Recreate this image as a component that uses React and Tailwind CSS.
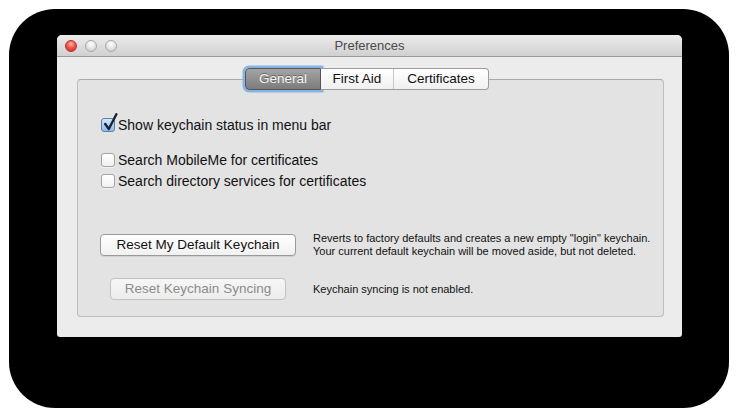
import React from "react";

const Light = ({ red }) => (
  <span
    className={
      red
        ? "w-[12px] h-[12px] rounded-full border border-[#b5312c] bg-[radial-gradient(circle_at_50%_30%,#ffb3aa_0%,#f2564d_45%,#c92a24_100%)]"
        : "w-[12px] h-[12px] rounded-full border border-[#a8a8a8] bg-[radial-gradient(circle_at_50%_30%,#ffffff_0%,#e4e4e4_50%,#c4c4c4_100%)]"
    }
  />
);

const Box = ({ checked }) => (
  <span
    className={
      checked
        ? "relative w-[14px] h-[14px] shrink-0 rounded-[3px] border border-[#5b7fab] bg-[linear-gradient(#d4e6f8,#8fbbe9)]"
        : "relative w-[14px] h-[14px] shrink-0 rounded-[3px] border border-[#a3a3a3] bg-[linear-gradient(#ffffff,#f1f1f1)] shadow-[0_1px_0_rgba(255,255,255,0.6)]"
    }
  >
    {checked && (
      <svg
        className="absolute left-[1px] -top-[6px]"
        width="15"
        height="19"
        viewBox="0 0 15 19"
      >
        <path
          d="M2.2 11 L5.8 16 L13.4 1.2"
          fill="none"
          stroke="#17243d"
          strokeWidth="2.4"
          strokeLinecap="round"
          strokeLinejoin="round"
        />
      </svg>
    )}
  </span>
);

const CheckRow = ({ checked, children }) => (
  <div className="flex items-center gap-[3px] h-[21px] pl-[1px]">
    <Box checked={checked} />
    <span className="text-[14px] text-[#111] leading-none">{children}</span>
  </div>
);

export default function App() {
  return (
    <div className="w-[739px] h-[417px] bg-white pt-[9px] pl-[9px] font-['Liberation_Sans',Arial,sans-serif]">
      <div className="w-[720px] h-[399px] rounded-[46px] bg-black pt-[26px] pl-[48px]">
        <div className="w-[625px] h-[302px] rounded-t-[5px] rounded-b-[3px] overflow-hidden bg-[#ececec] flex flex-col">
          {/* title bar */}
          <div className="h-[22px] shrink-0 border-b border-[#999] bg-[linear-gradient(#ececec,#d0d0d0)] grid grid-cols-[1fr_auto_1fr] items-center">
            <div className="flex items-center gap-[8px] pl-[8px]">
              <Light red />
              <Light />
              <Light />
            </div>
            <div className="text-[13px] text-[#4a4a4a] leading-none">Preferences</div>
            <div />
          </div>

          {/* content */}
          <div className="px-[20px] pt-[11px]">
            <div className="relative z-10 flex h-[22px] ml-[168px] text-[13.5px] leading-none">
              <div className="w-[76px] flex items-center justify-center rounded-l-[4px] border border-[#555] bg-[linear-gradient(#a4a4a4,#7c7c7c)] text-[#f4f4f4] ring-[2.5px] ring-[#86b3e6] [text-shadow:0_-1px_0_rgba(0,0,0,0.35)]">
                General
              </div>
              <div className="flex rounded-r-[4px] border border-l-0 border-[#9d9d9d] bg-[linear-gradient(#ffffff,#f0f0f0)] text-[#111]">
                <div className="w-[73px] flex items-center justify-center border-r border-[#c9c9c9]">
                  First Aid
                </div>
                <div className="w-[94px] flex items-center justify-center">
                  Certificates
                </div>
              </div>
            </div>

            <div className="-mt-[11px] w-[587px] h-[238px] rounded-[4px] border border-[#bdbdbd] border-t-[#a9a9a9] bg-[#e3e3e3] pt-[34px] pl-[22px]">
              <CheckRow checked>Show keychain status in menu bar</CheckRow>
              <div className="mt-[14px]">
                <CheckRow>Search MobileMe for certificates</CheckRow>
                <CheckRow>Search directory services for certificates</CheckRow>
              </div>

              <div className="mt-[41px] grid grid-cols-[196px_1fr] gap-x-[17px] gap-y-[20px]">
                <div className="h-[26px] flex items-center justify-center">
                  <button className="w-[196px] h-[22px] rounded-[4px] border border-[#9a9a9a] bg-[linear-gradient(#ffffff,#f1f1f1)] text-[13.5px] text-[#111] leading-none shadow-[0_1px_0_rgba(0,0,0,0.08)]">
                    Reset My Default Keychain
                  </button>
                </div>
                <div className="h-[26px] flex flex-col justify-center text-[11px] leading-[13px] text-[#111]">
                  <span>Reverts to factory defaults and creates a new empty "login" keychain.</span>
                  <span>Your current default keychain will be moved aside, but not deleted.</span>
                </div>

                <div className="h-[22px] flex items-center justify-center">
                  <button className="w-[176px] h-[22px] rounded-[4px] border border-[#c2c2c2] bg-[linear-gradient(#f6f6f6,#ececec)] text-[13.5px] text-[#8c8c8c] leading-none">
                    Reset Keychain Syncing
                  </button>
                </div>
                <div className="h-[22px] flex items-center text-[11px] text-[#111]">
                  Keychain syncing is not enabled.
                </div>
              </div>
            </div>
          </div>
        </div>
      </div>
    </div>
  );
}
